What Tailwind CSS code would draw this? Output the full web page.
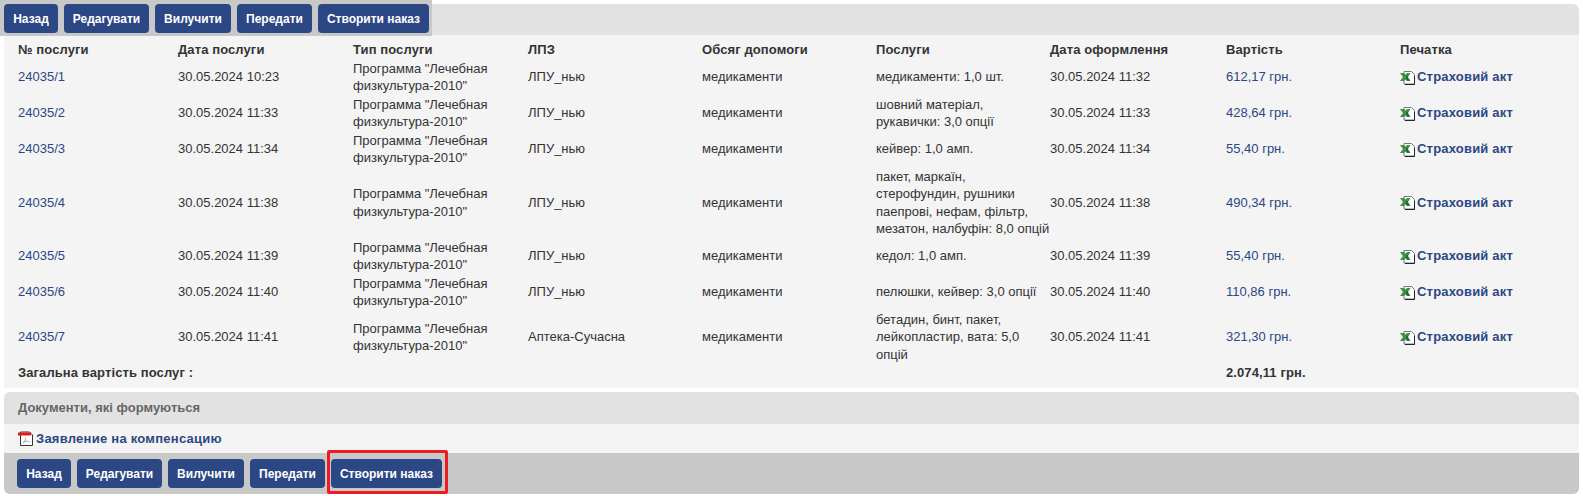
<!DOCTYPE html>
<html lang="uk">
<head>
    <meta charset="UTF-8">
    <title>Послуги</title>
    <script src="https://cdn.jsdelivr.net/npm/@tailwindcss/browser@4"></script>
</head>
<body class="bg-white text-[#333] text-[13px] leading-[17.5px] font-['Liberation_Sans',Arial,sans-serif]">

<svg class="hidden">
    <symbol id="xls" viewBox="0 0 15 15">
        <path d="M4 1.500h7.500l3 3v9.500H4z" fill="#fff" stroke="#777"/>
        <path d="M5 14.500h9.500V6" fill="none" stroke="#222"/>
        <path d="M0 3h4l1.500 1.500L7 3h3.500L8 7l2.500 4H7L5.500 9.500 4 11H0l3-4z" fill="#3f8f45"/>
        <path d="M6 6h2l-.5 1 2 3.500H7.500L6 8.500z" fill="#1f6a2c"/>
    </symbol>
    <symbol id="pdf" viewBox="0 0 15 15">
        <path d="M2.500 1h9l3 3v10.500h-12z" fill="#fff" stroke="#333"/>
        <rect x="0" y="1.500" width="13" height="3" fill="#e01b1b"/>
        <path d="M5 12.500c2-2 3-4.500 2.500-6M5.500 10.500c2-.5 4-.5 6.500.5" fill="none" stroke="#aaa"/>
    </symbol>
</svg>

<!-- services -->
<div class="relative mx-1 mt-1">
    <div class="h-[31px] bg-[#e2e2e2] rounded-t-md"></div>
    <div class="absolute -left-1 -top-1 flex gap-1.5 w-[432px] h-9 pl-1 pt-1 bg-[#c8c8c8]">
        <button class="h-[29px] w-[54px] rounded bg-[#2b4784] text-white font-bold text-xs">Назад</button>
        <button class="h-[29px] w-[85px] rounded bg-[#2b4784] text-white font-bold text-xs">Редагувати</button>
        <button class="h-[29px] w-[76px] rounded bg-[#2b4784] text-white font-bold text-xs">Вилучити</button>
        <button class="h-[29px] w-[75px] rounded bg-[#2b4784] text-white font-bold text-xs">Передати</button>
        <button class="h-[29px] w-[111px] rounded bg-[#2b4784] text-white font-bold text-xs">Створити наказ</button>
    </div>

    <div class="bg-[#f4f4f4] pl-[14px] pb-1.5">
        <table class="table-fixed w-[1561px] border-collapse text-[13px] leading-[17.5px]">
            <colgroup>
                <col class="w-[160px]"><col class="w-[175px]"><col class="w-[175px]"><col class="w-[174px]"><col class="w-[174px]"><col class="w-[174px]"><col class="w-[176px]"><col class="w-[174px]"><col>
            </colgroup>
            <thead>
                <tr class="h-6 text-left tracking-[0.1px]">
                    <th class="font-bold pt-1.5">№ послуги</th><th class="font-bold pt-1.5">Дата послуги</th><th class="font-bold pt-1.5">Тип послуги</th><th class="font-bold pt-1.5">ЛПЗ</th><th class="font-bold pt-1.5">Обсяг допомоги</th><th class="font-bold pt-1.5">Послуги</th><th class="font-bold pt-1.5">Дата оформлення</th><th class="font-bold pt-1.5">Вартість</th><th class="font-bold pt-1.5">Печатка</th>
                </tr>
            </thead>
            <tbody class="align-middle">
                <tr class="h-9"><td class="text-[#2b4784]">24035/1</td><td>30.05.2024 10:23</td><td>Программа "Лечебная<br>физкультура-2010"</td><td>ЛПУ_нью</td><td>медикаменти</td><td>медикаменти: 1,0 шт.</td><td>30.05.2024 11:32</td><td class="text-[#2b4784]">612,17 грн.</td><td class="font-bold tracking-[0.2px] text-[#2b4784]"><a class="flex items-center gap-0.5"><svg class="size-[15px]"><use href="#xls"/></svg>Страховий акт</a></td></tr>
                <tr class="h-9"><td class="text-[#2b4784]">24035/2</td><td>30.05.2024 11:33</td><td>Программа "Лечебная<br>физкультура-2010"</td><td>ЛПУ_нью</td><td>медикаменти</td><td>шовний матеріал,<br>рукавички: 3,0 опції</td><td>30.05.2024 11:33</td><td class="text-[#2b4784]">428,64 грн.</td><td class="font-bold tracking-[0.2px] text-[#2b4784]"><a class="flex items-center gap-0.5"><svg class="size-[15px]"><use href="#xls"/></svg>Страховий акт</a></td></tr>
                <tr class="h-9"><td class="text-[#2b4784]">24035/3</td><td>30.05.2024 11:34</td><td>Программа "Лечебная<br>физкультура-2010"</td><td>ЛПУ_нью</td><td>медикаменти</td><td>кейвер: 1,0 амп.</td><td>30.05.2024 11:34</td><td class="text-[#2b4784]">55,40 грн.</td><td class="font-bold tracking-[0.2px] text-[#2b4784]"><a class="flex items-center gap-0.5"><svg class="size-[15px]"><use href="#xls"/></svg>Страховий акт</a></td></tr>
                <tr class="h-[71px]"><td class="text-[#2b4784]">24035/4</td><td>30.05.2024 11:38</td><td>Программа "Лечебная<br>физкультура-2010"</td><td>ЛПУ_нью</td><td>медикаменти</td><td>пакет, маркаїн,<br>стерофундин, рушники<br>паепрові, нефам, фільтр,<br>мезатон, налбуфін: 8,0 опцій</td><td>30.05.2024 11:38</td><td class="text-[#2b4784]">490,34 грн.</td><td class="font-bold tracking-[0.2px] text-[#2b4784]"><a class="flex items-center gap-0.5"><svg class="size-[15px]"><use href="#xls"/></svg>Страховий акт</a></td></tr>
                <tr class="h-9"><td class="text-[#2b4784]">24035/5</td><td>30.05.2024 11:39</td><td>Программа "Лечебная<br>физкультура-2010"</td><td>ЛПУ_нью</td><td>медикаменти</td><td>кедол: 1,0 амп.</td><td>30.05.2024 11:39</td><td class="text-[#2b4784]">55,40 грн.</td><td class="font-bold tracking-[0.2px] text-[#2b4784]"><a class="flex items-center gap-0.5"><svg class="size-[15px]"><use href="#xls"/></svg>Страховий акт</a></td></tr>
                <tr class="h-9"><td class="text-[#2b4784]">24035/6</td><td>30.05.2024 11:40</td><td>Программа "Лечебная<br>физкультура-2010"</td><td>ЛПУ_нью</td><td>медикаменти</td><td>пелюшки, кейвер: 3,0 опції</td><td>30.05.2024 11:40</td><td class="text-[#2b4784]">110,86 грн.</td><td class="font-bold tracking-[0.2px] text-[#2b4784]"><a class="flex items-center gap-0.5"><svg class="size-[15px]"><use href="#xls"/></svg>Страховий акт</a></td></tr>
                <tr class="h-[54px]"><td class="text-[#2b4784]">24035/7</td><td>30.05.2024 11:41</td><td>Программа "Лечебная<br>физкультура-2010"</td><td>Аптека-Сучасна</td><td>медикаменти</td><td>бетадин, бинт, пакет,<br>лейкопластир, вата: 5,0<br>опцій</td><td>30.05.2024 11:41</td><td class="text-[#2b4784]">321,30 грн.</td><td class="font-bold tracking-[0.2px] text-[#2b4784]"><a class="flex items-center gap-0.5"><svg class="size-[15px]"><use href="#xls"/></svg>Страховий акт</a></td></tr>
                <tr class="h-[18px] font-bold tracking-[0.1px]"><td colspan="7">Загальна вартість послуг :</td><td>2.074,11 грн.</td><td></td></tr>
            </tbody>
        </table>
    </div>
</div>

<!-- documents -->
<div class="relative mx-1 mt-1">
    <div class="h-8 pl-[14px] flex items-center bg-[#e2e2e2] rounded-t-md font-bold text-[#666]">Документи, які формуються</div>
    <div class="h-[29px] pl-[14px] flex items-center gap-[3px] bg-[#f4f4f4] font-bold tracking-[0.25px] text-[#2b4784]">
        <svg class="size-[15px]"><use href="#pdf"/></svg>
        <a>Заявление на компенсацию</a>
    </div>
    <div class="flex gap-1.5 h-[41px] pl-[13px] pt-1.5 bg-[#c8c8c8] rounded-b-md">
        <button class="h-[29px] w-[54px] rounded bg-[#2b4784] text-white font-bold text-xs">Назад</button>
        <button class="h-[29px] w-[85px] rounded bg-[#2b4784] text-white font-bold text-xs">Редагувати</button>
        <button class="h-[29px] w-[76px] rounded bg-[#2b4784] text-white font-bold text-xs">Вилучити</button>
        <button class="h-[29px] w-[75px] rounded bg-[#2b4784] text-white font-bold text-xs">Передати</button>
        <button class="h-[29px] w-[111px] rounded bg-[#2b4784] text-white font-bold text-xs">Створити наказ</button>
    </div>
    <!-- annotation box round the last button -->
    <div class="absolute left-[323px] top-[58px] w-[121px] h-[44px] border-[3px] border-[#ed1c24] rounded-[2px]"></div>
</div>

</body>
</html>
